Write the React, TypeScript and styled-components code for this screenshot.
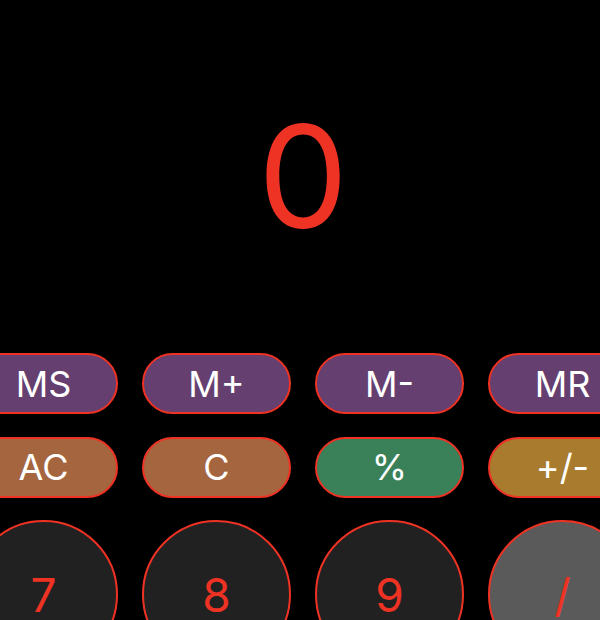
import styled, { createGlobalStyle } from 'styled-components'

const GlobalStyle = createGlobalStyle`
  html, body {
    margin: 0;
    padding: 0;
    background: #000;
    height: 620px;
    overflow: hidden;
  }
  body {
    font-family: Inter, "Liberation Sans", sans-serif;
  }
`

const RED = '#ee3224'

const Screen = styled.div`
  width: 600px;
  height: 620px;
  overflow: hidden;
  background: #000;
  display: flex;
  flex-direction: column;
`

const Display = styled.div`
  height: 350px;
  flex-shrink: 0;
  display: flex;
  align-items: center;
  justify-content: center;
  padding-left: 6px;
  color: ${RED};
  font-size: 143px;
  font-weight: 400;
  line-height: 1;
`

const Keypad = styled.div`
  margin-top: 3px;
  display: flex;
  justify-content: center;
  padding-left: 6px;
`

const Grid = styled.div`
  flex-shrink: 0;
  display: grid;
  grid-template-columns: repeat(4, 149px);
  column-gap: 24px;
  row-gap: 22.5px;
`

type Tone = 'memory' | 'clear' | 'percent' | 'sign' | 'digit' | 'operator'

const fills: Record<Tone, string> = {
  memory: '#643f6f',
  clear: '#a5653f',
  percent: '#3a8159',
  sign: '#a87b2e',
  digit: '#212121',
  operator: '#5a5a5a',
}

const Pill = styled.button<{ $tone: Tone }>`
  box-sizing: border-box;
  height: 61px;
  border-radius: 31px;
  border: 2px solid ${RED};
  background: ${(p) => fills[p.$tone]};
  color: #fff;
  font-family: inherit;
  font-size: 36px;
  font-weight: 400;
  line-height: 1;
  display: flex;
  align-items: center;
  justify-content: center;
  padding: 0;
`

const Round = styled.button<{ $tone: Tone }>`
  box-sizing: border-box;
  width: 149px;
  height: 149px;
  border-radius: 50%;
  border: 2px solid ${RED};
  background: ${(p) => fills[p.$tone]};
  color: ${RED};
  font-family: inherit;
  font-size: 46px;
  font-weight: 400;
  line-height: 1;
  display: flex;
  align-items: center;
  justify-content: center;
  padding: 0;
`

const pillKeys: [string, Tone][] = [
  ['MS', 'memory'],
  ['M+', 'memory'],
  ['M-', 'memory'],
  ['MR', 'memory'],
  ['AC', 'clear'],
  ['C', 'clear'],
  ['%', 'percent'],
  ['+/-', 'sign'],
]

const roundKeys: [string, Tone][] = [
  ['7', 'digit'],
  ['8', 'digit'],
  ['9', 'digit'],
  ['/', 'operator'],
]

export default function App() {
  return (
    <Screen>
      <GlobalStyle />
      <Display>0</Display>
      <Keypad>
        <Grid>
          {pillKeys.map(([label, tone]) => (
            <Pill key={label} $tone={tone}>
              {label}
            </Pill>
          ))}
          {roundKeys.map(([label, tone]) => (
            <Round key={label} $tone={tone}>
              {label}
            </Round>
          ))}
        </Grid>
      </Keypad>
    </Screen>
  )
}
